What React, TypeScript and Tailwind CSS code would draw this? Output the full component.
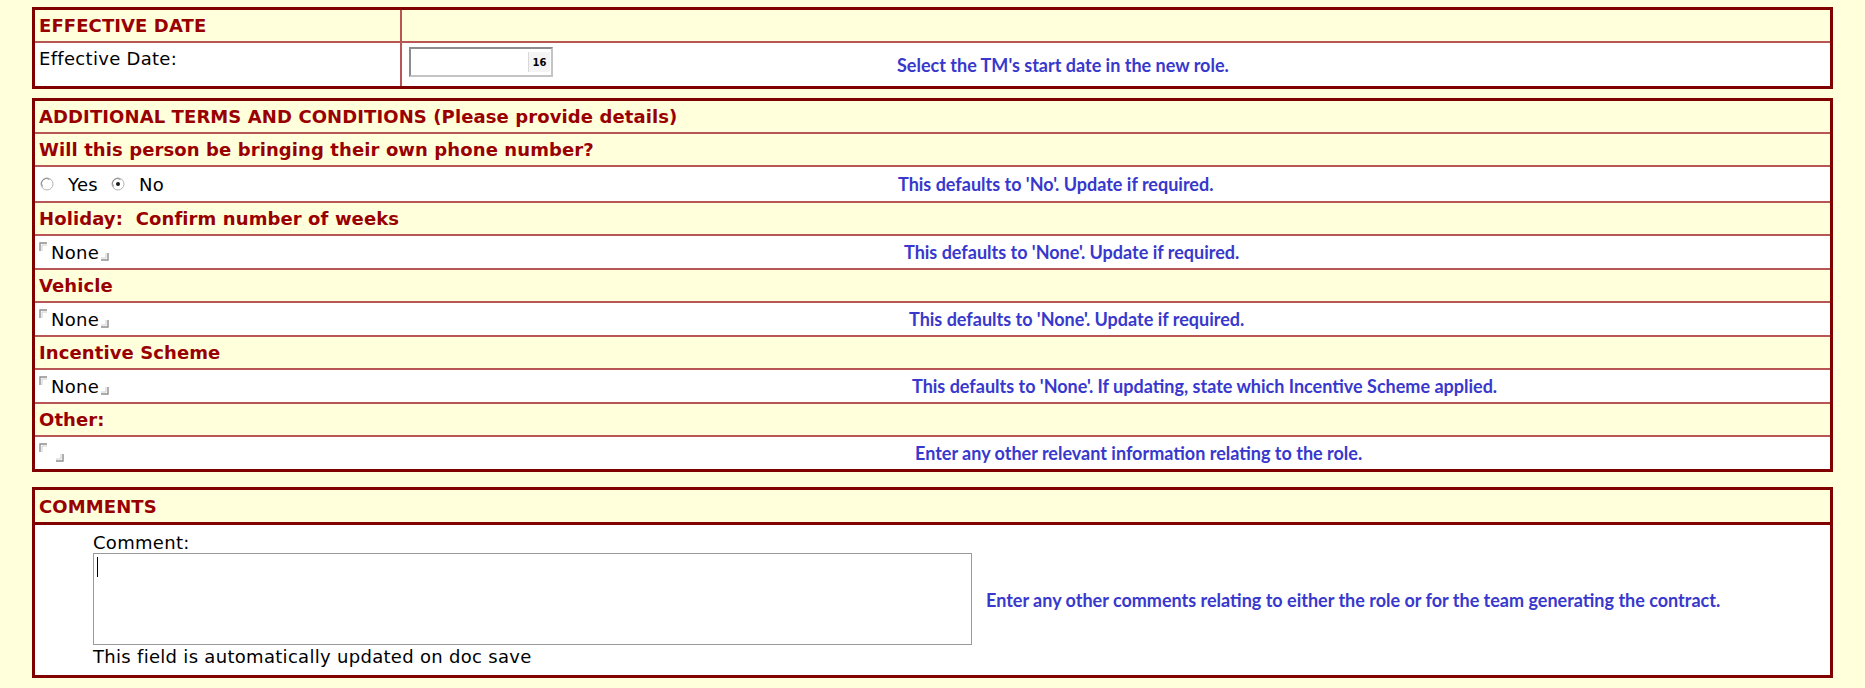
import React from "react";

// Lotus-Notes style contract form: three bordered tables on a pale yellow page
const LINE = "border-b-2 border-[#b85656]";
const BODY = "font-['DejaVu_Sans',Verdana,sans-serif] text-[18px] tracking-[0.3px] text-black";
const HEAD = "font-bold tracking-[0.1px] text-[#990000] whitespace-pre";
const HINT = "font-['Lato',Calibri,sans-serif] text-[18px] font-bold leading-[20px] tracking-normal text-[#3838cc] whitespace-nowrap";

function OpenMark() {
  return (
    <svg width="8" height="9" viewBox="0 0 8 9" className="shrink-0 self-start">
      <path d="M1 9 V1 H8" fill="none" stroke="#8e8e8e" strokeWidth="1.4" />
      <path d="M3 9 V3 H8" fill="none" stroke="#d0d0d0" strokeWidth="1" />
    </svg>
  );
}

function CloseMark() {
  return (
    <svg width="8" height="8" viewBox="0 0 8 8" className="mb-[2px] shrink-0 self-end">
      <path d="M0 7 H7 V0" fill="none" stroke="#8e8e8e" strokeWidth="1.4" />
      <path d="M0 5 H5 V0" fill="none" stroke="#d0d0d0" strokeWidth="1" />
    </svg>
  );
}

function Field({ value }: { value?: string }) {
  return (
    <div className="flex h-[21px] leading-[21px]">
      <OpenMark />
      {value ? <span className="ml-[4px] mr-[2px]">{value}</span> : <span className="w-[9px]" />}
      <CloseMark />
    </div>
  );
}

function Radio({ checked }: { checked?: boolean }) {
  return (
    <svg width="14" height="14" viewBox="0 0 14 14" className="shrink-0">
      <circle cx="7" cy="7" r="6" fill="#ffffff" stroke="#b4b4b4" strokeWidth="1" />
      <path d="M2.5 9.5 A5 5 0 0 1 9.5 2.5" fill="none" stroke="#8a8a8a" strokeWidth="1" />
      {checked && <circle cx="7" cy="7" r="2" fill="#1a1a1a" />}
    </svg>
  );
}

function HeadRow({ title, line = true }: { title: string; line?: boolean }) {
  return (
    <div className={`flex h-[33px] items-center bg-[#ffffdc] pl-[4px] ${HEAD} ${line ? LINE : ""}`}>
      {title}
    </div>
  );
}

function Table({ children }: { children: React.ReactNode }) {
  return <div className={`border-[3px] border-[#800000] bg-white ${BODY}`}>{children}</div>;
}

export default function App() {
  return (
    <div className="min-h-screen bg-[#ffffdc] px-[32px] pt-[7px]">
      {/* Effective date */}
      <Table>
        <div className={`flex h-[33px] bg-[#ffffdc] ${LINE}`}>
          <div className={`flex w-[367px] shrink-0 items-center border-r-2 border-[#b85656] pl-[4px] ${HEAD}`}>
            EFFECTIVE DATE
          </div>
          <div className="flex-1" />
        </div>
        <div className="flex h-[43px]">
          <div className="w-[367px] shrink-0 border-r-2 border-[#b85656] pl-[4px] pt-[5px] leading-[21px]">
            Effective Date:
          </div>
          <div className="flex flex-1 items-start pl-[7px]">
            <div className="mt-[4px] flex h-[30px] w-[144px] items-center justify-end border-2 border-t-[#8c8c8c] border-l-[#8c8c8c] border-r-[#c4c4c4] border-b-[#c4c4c4] bg-white pr-[1px]">
              <div className="flex h-[20px] w-[22px] items-center justify-center border-l border-[#d8d8d8] bg-[#f4f4f4] font-['DejaVu_Sans',sans-serif] text-[10px] font-bold tracking-normal text-black">
                16
              </div>
            </div>
            <span className={`ml-[344px] self-center ${HINT}`}>Select the TM's start date in the new role.</span>
          </div>
        </div>
      </Table>

      <div className="mt-[9px]">
        <Table>
          <HeadRow title="ADDITIONAL TERMS AND CONDITIONS (Please provide details)" />
          <HeadRow title="Will this person be bringing their own phone number?" />
          <div className={`flex h-[36px] items-center ${LINE}`}>
            <div className="flex w-[863px] shrink-0 items-center pl-[5px]">
              <Radio />
              <span className="ml-[14px]">Yes</span>
              <span className="ml-[13px]">
                <Radio checked />
              </span>
              <span className="ml-[14px]">No</span>
            </div>
            <span className={HINT}>This defaults to 'No'. Update if required.</span>
          </div>
          <HeadRow title="Holiday:  Confirm number of weeks" />
          <div className={`flex h-[34px] items-center ${LINE}`}>
            <div className="w-[869px] shrink-0 pl-[4px]">
              <Field value="None" />
            </div>
            <span className={HINT}>This defaults to 'None'. Update if required.</span>
          </div>
          <HeadRow title="Vehicle" />
          <div className={`flex h-[34px] items-center ${LINE}`}>
            <div className="w-[874px] shrink-0 pl-[4px]">
              <Field value="None" />
            </div>
            <span className={HINT}>This defaults to 'None'. Update if required.</span>
          </div>
          <HeadRow title="Incentive Scheme" />
          <div className={`flex h-[34px] items-center ${LINE}`}>
            <div className="w-[877px] shrink-0 pl-[4px]">
              <Field value="None" />
            </div>
            <span className={HINT}>This defaults to 'None'. If updating, state which Incentive Scheme applied.</span>
          </div>
          <HeadRow title="Other:" />
          <div className="flex h-[32px] items-center">
            <div className="w-[880px] shrink-0 pl-[4px]">
              <Field />
            </div>
            <span className={HINT}>Enter any other relevant information relating to the role.</span>
          </div>
        </Table>
      </div>

      <div className="mt-[15px]">
        <Table>
          <div className={`flex h-[35px] items-center border-b-[3px] border-[#800000] bg-[#ffffdc] pl-[4px] ${HEAD}`}>
            COMMENTS
          </div>
          <div className="flex h-[150px] items-center pl-[58px]">
            <div className="flex flex-col leading-[20px]">
              <span>Comment:</span>
              <div className="h-[92px] w-[879px] border border-[#9a9a9a] bg-white pl-[3px] pt-[3px]">
                <div className="h-[20px] w-px bg-black" />
              </div>
              <span className="mt-[2px]">This field is automatically updated on doc save</span>
            </div>
            <span className={`ml-[14px] ${HINT}`}>
              Enter any other comments relating to either the role or for the team generating the contract.
            </span>
          </div>
        </Table>
      </div>
    </div>
  );
}
